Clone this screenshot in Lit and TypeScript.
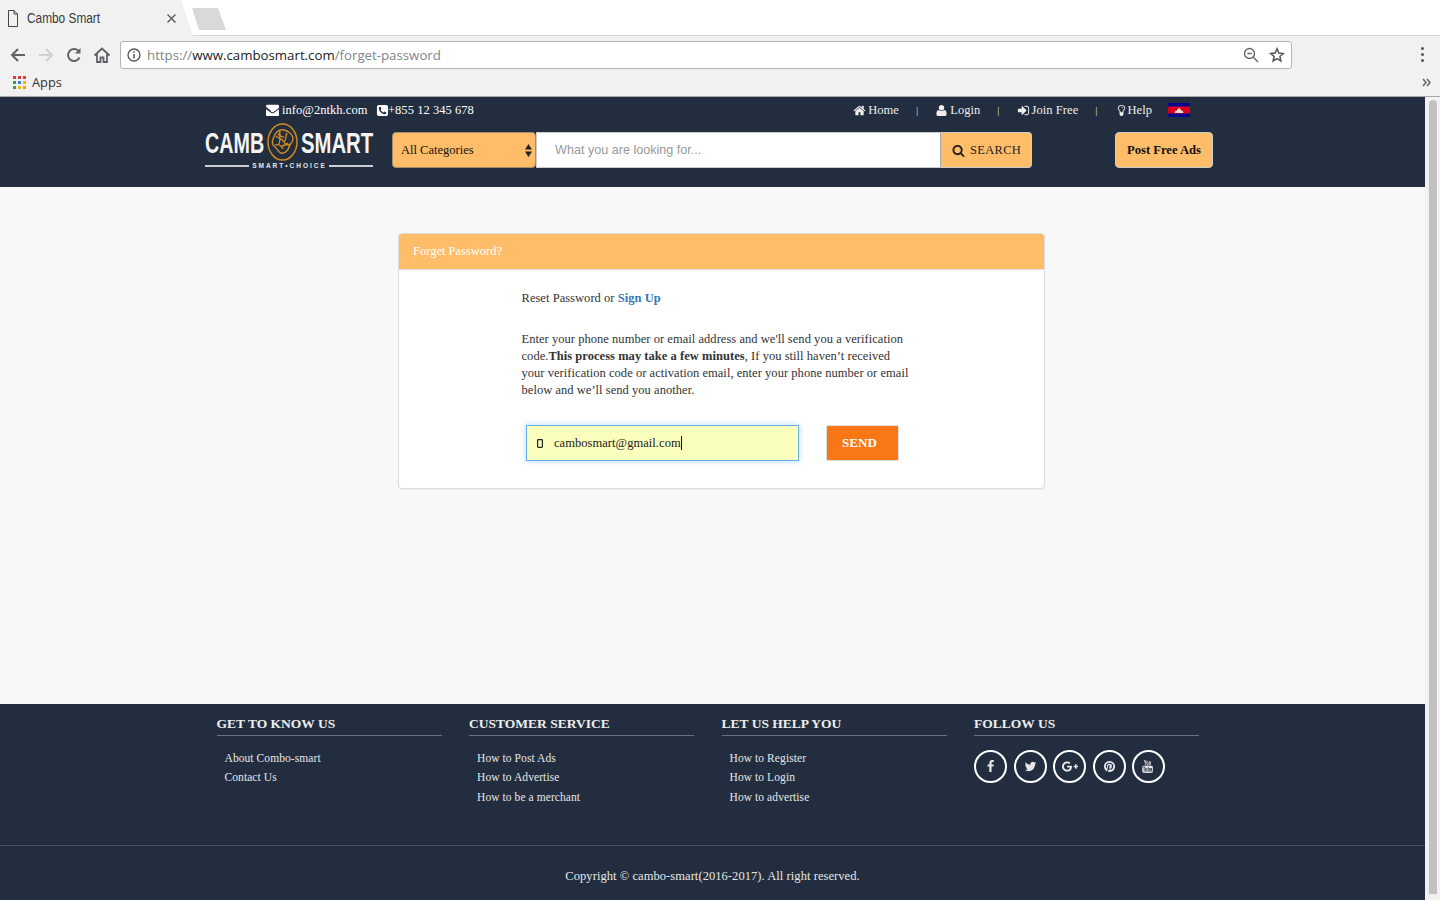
import { LitElement, html, css } from "lit";
import { customElement } from "lit/decorators.js";

const fa = (d: string, box = 1792, cls = "fa") =>
  html`<svg class=${cls} viewBox="0 0 ${box} 1792" fill="currentColor"><path d=${d}></path></svg>`;

const P = {
  envelope: "M1792 710v794q0 66-47 113t-113 47H160q-66 0-113-47T0 1504V710q44 49 101 87 362 246 497 345 57 42 92.500 65.500t94.500 48 110 24.500h2q51 0 110-24.500t94.500-48 92.500-65.500q170-123 498-345 57-39 100-87zm0-294q0 79-49 151t-122 123q-376 261-468 325-10 7-42.500 30.500t-54 38-52 32.500-57.500 27-50 9h-2q-23 0-50-9t-57.500-27-52-32.500-54-38T639 867q-91-64-262-182.500T172 542q-62-42-117-115.500T0 290q0-78 41.500-130T160 108h1472q65 0 112.500 47t47.500 113z",
  phone: "M1408 1193q0-11-2-16t-18-16.500-40.500-25-47.500-26.500-45.500-25-28.500-15q-5-3-19-13t-25-15-21-5q-15 0-36.500 20.500t-39.500 45-38.500 45-33.500 20.500q-7 0-16.500-3.500t-15.500-6.500-17-9.500-14-8.500q-99-55-170-126.500t-127-170.500q-2-3-8.500-14t-9.500-17-6.500-15.500-3.500-16.500q0-13 20.500-33.500t45-38.500 45-39.500 20.500-36.500q0-10-5-21t-15-25-13-19q-3-6-15-28.500t-25-45.500-26.500-47.500-25-40.500-16.500-18-16-2q-48 0-101 22-46 21-80 94.500t-34 130.500q0 16 2.500 34t5 30.500 9 33 10 29.500 12.500 33 11 30q60 164 216.500 320.500t320.500 216.500q6 2 30 11t33 12.500 29.500 10 33 9 30.500 5 34 2.500q57 0 130.500-34t94.500-80q22-53 22-101zm256-777v960q0 119-84.500 203.500t-203.500 84.500h-960q-119 0-203.500-84.500t-84.500-203.500v-960q0-119 84.500-203.500t203.500-84.500h960q119 0 203.500 84.500t84.500 203.500z",
  home: "M1472 992v480q0 26-19 45t-45 19h-384v-384h-256v384h-384q-26 0-45-19t-19-45v-480q0-1 .5-3t.5-3l575-474 575 474q1 2 1 6zm223-69l-62 74q-8 9-21 11h-3q-13 0-21-7l-692-577-692 577q-12 8-24 7-13-2-21-11l-62-74q-8-10-7-23.500t11-21.500l719-599q32-26 76-26t76 26l244 204v-195q0-14 9-23t23-9h192q14 0 23 9t9 23v408l219 182q10 8 11 21.500t-7 23.500z",
  user: "M1600 1405q0 120-73 189.500t-194 69.500h-874q-121 0-194-69.500t-73-189.500q0-53 3.500-103.500t14-109 26.500-108.500 43-97.500 62-81 85.500-53.500 111.500-20q9 0 42 21.500t74.500 48 108 48 133.500 21.500 133.500-21.500 108-48 74.500-48 42-21.500q61 0 111.500 20t85.500 53.500 62 81 43 97.500 26.500 108.500 14 109 3.500 103.500zm-320-893q0 159-112.500 271.500t-271.500 112.500-271.500-112.500-112.500-271.500 112.500-271.500 271.500-112.500 271.500 112.500 112.500 271.500z",
  signin: "M1312 896q0 26-19 45l-544 544q-19 19-45 19t-45-19-19-45v-288h-448q-26 0-45-19t-19-45v-384q0-26 19-45t45-19h448v-288q0-26 19-45t45-19 45 19l544 544q19 19 19 45zm352-352v704q0 119-84.500 203.500t-203.500 84.500h-320q-13 0-22.500-9.500t-9.500-22.500q0-4-1-20t-.5-26.500 3-23.500 10-19.500 20.500-6.500h320q66 0 113-47t47-113v-704q0-66-47-113t-113-47h-312l-11.500-1-11.500-3-8-5.500-7-9-2-13.500q0-4-1-20t-.5-26.500 3-23.500 10-19.500 20.500-6.500h320q119 0 203.500 84.500t84.500 203.500z",
  bulb: "M1120 576q0 13-9.500 22.500t-22.500 9.500-22.500-9.500-9.500-22.500q0-46-54-71t-106-25q-13 0-22.500-9.500t-9.500-22.500 9.500-22.500 22.500-9.500q50 0 99.500 16t87 54 37.500 90zm160 0q0-72-34.500-134t-90-101.500-123-62-136.500-22.500-136.500 22.500-123 62-90 101.500-34.500 134q0 101 68 180 10 11 30.500 33t30.500 33q128 153 141 298h228q13-145 141-298 10-11 30.500-33t30.500-33q68-79 68-180zm128 0q0 155-103 268-45 49-74.500 87t-59.500 95.500-34 107.500q47 28 47 82 0 37-25 64 25 27 25 64 0 52-45 81 13 23 13 47 0 46-31.500 71t-77.500 25q-20 44-60 70t-87 26-87-26-60-70q-46 0-77.500-25t-31.500-71q0-24 13-47-45-29-45-81 0-37 25-64-25-27-25-64 0-54 47-82-4-50-34-107.500t-59.500-95.500-74.500-87q-103-113-103-268 0-99 44.500-184.500t117-142 164-89 186.500-32.500 186.500 32.500 164 89 117 142 44.500 184.500z",
  search: "M1216 832q0-185-131.500-316.500t-316.500-131.500-316.500 131.500-131.500 316.500 131.500 316.500 316.500 131.500 316.500-131.500 131.500-316.500zm512 832q0 52-38 90t-90 38q-54 0-90-38l-343-342q-179 124-399 124-143 0-273.500-55.500t-225-150-150-225-55.500-273.500 55.500-273.500 150-225 225-150 273.500-55.500 273.500 55.500 225 150 150 225 55.500 273.500q0 220-124 399l343 343q37 37 37 90z",
  facebook: "M1343 12v264h-157q-86 0-116 36t-30 108v189h293l-39 296h-254v759h-306v-759h-255v-296h255v-218q0-186 104-288.500t277-102.500q147 0 228 12z",
  twitter: "M1684 408q-67 98-162 167 1 14 1 42 0 130-38 259.500t-115.500 248.500-184.500 210.500-258 146-323 54.500q-271 0-496-145 35 4 78 4 225 0 401-138-105-2-188-64.500t-114-159.500q33 5 61 5 43 0 85-11-112-23-185.500-111.500t-73.500-205.500v-4q68 38 146 41-66-44-105-115t-39-154q0-88 44-163 121 149 294.500 238.500t371.500 99.500q-8-38-8-74 0-134 94.500-228.500t228.500-94.500q140 0 236 102 109-21 205-78-37 115-142 178 92-10 184-50z",
  gplus: "M1437 913q0 208-87 370.500t-248 254-369 91.500q-149 0-285-58t-234-156-156-234-58-285 58-285 156-234 234-156 285-58q286 0 491 192l-199 191q-117-113-292-113-123 0-227.500 62t-165.500 168.500-61 232.500 61 232.500 165.500 168.500 227.500 62q83 0 152.500-23t114.500-57.500 78.500-78.500 49-83 21.500-74h-416v-252h692q12 63 12 122zm867-122v210h-209v209h-210v-209h-209v-210h209v-209h210v209h209z",
  pinterest: "M1664 896q0 209-103 385.500t-279.500 279.500-385.500 103q-111 0-218-32 59-93 78-164 9-34 54-211 20 39 73 67.500t114 28.500q121 0 216-68.500t147-188.500 52-270q0-114-59.500-214t-172.500-163-255-63q-105 0-196 29t-154.500 77-109 110.500-67 129.500-21.500 134q0 104 40 183t117 111q30 12 38-20 2-7 8-31t8-30q6-23-11-43-51-61-51-151 0-151 104.500-259.500t273.500-108.500q151 0 235.500 82t84.500 213q0 170-68.500 289t-175.500 119q-61 0-98-43.500t-23-104.500q8-35 26.500-93.500t30-103 11.500-75.500q0-50-27-83t-77-33q-62 0-105 57t-43 142q0 73 25 122l-99 418q-17 70-13 177-206-91-333-281t-127-423q0-209 103-385.500t279.500-279.500 385.500-103 385.500 103 279.500 279.500 103 385.500z",
  youtube: "M971 1244v211q0 67-39 67-23 0-45-22v-301q22-22 45-22 39 0 39 67zm338 1v46h-90v-46q0-68 45-68t45 68zm-966-218h107v-94h-312v94h105v569h100v-569zm288 569h89v-494h-89v378q-30 42-57 42-18 0-21-21-1-3-1-35v-364h-89v391q0 49 8 73 12 37 58 37 48 0 102-61v54zm429-148v-197q0-73-9-99-17-56-71-56-50 0-93 54v-217h-89v663h89v-48q45 55 93 55 54 0 71-55 9-27 9-100zm338-10v-13h-91q0 51-2 61-7 36-40 36-46 0-46-69v-87h179v-103q0-79-27-116-39-51-106-51-68 0-107 51-28 37-28 116v173q0 79 29 116 39 51 108 51 72 0 108-53 18-27 21-54 2-9 2-58zm-608-913v-210q0-69-43-69t-43 69v210q0 70 43 70t43-70zm719 751q0 234-26 350-14 59-58 99t-102 46q-184 21-555 21t-555-21q-58-6-102.500-46t-57.500-99q-26-112-26-350 0-234 26-350 14-59 58-99t103-47q183-20 554-20t555 20q58 7 102.500 47t57.500 99q26 112 26 350zm-998-1276h102l-121 399v271h-100v-271q-14-74-61-212-37-103-65-187h106l71 263zm370 333v175q0 81-28 118-38 51-106 51-67 0-105-51-28-38-28-118v-175q0-80 28-117 38-51 105-51 68 0 106 51 28 37 28 117zm335-162v499h-91v-55q-53 62-103 62-46 0-59-37-8-24-8-75v-394h91v367q0 33 1 35 3 22 21 22 27 0 57-43v-381h91z",
};

const footerCols = [
  { title: "GET TO KNOW US", links: ["About Combo-smart", "Contact Us"] },
  { title: "CUSTOMER SERVICE", links: ["How to Post Ads", "How to Advertise", "How to be a merchant"] },
  { title: "LET US HELP YOU", links: ["How to Register", "How to Login", "How to advertise"] },
];

const appsColors = ["#e53935", "#e53935", "#e53935", "#2e9e4f", "#3f7fe8", "#f4b400", "#2e9e4f", "#f4b400", "#f4a000"];

@customElement("app-root")
export class AppRoot extends LitElement {
  static styles = css`
    :host { display: block; width: 1440px; height: 900px; overflow: hidden; font-family: "Liberation Serif", "Times New Roman", serif; }
    * { box-sizing: border-box; }
    a { color: inherit; text-decoration: none; }

    .strip { height: 36px; background: #fff; display: flex; border-bottom: 1px solid #d4d4d4; }
    .tab { width: 193px; height: 36px; background: #f1f1f1; clip-path: polygon(0 0, 181px 0, 193px 36px, 0 36px); display: flex; align-items: center; padding: 0 0 0 8px; color: #333; }
    .tab-wrap { width: 140px; margin-left: 9px; white-space: nowrap; }
    .tab-title { display: inline-block; font: 15px "Liberation Sans", Arial, sans-serif; color: #3a3a3a; transform: scaleX(.79); transform-origin: left center; margin-right: -19px; }
    .newtab { width: 34px; height: 22px; margin: 8px 0 0 -1px; background: #d9d9d9; clip-path: polygon(0 0, 26px 0, 34px 22px, 7px 22px); }

    .toolbar { height: 34px; background: #f1f1f1; display: flex; align-items: center; padding: 3px 0 0 9px; }
    .nav-i { width: 18px; height: 18px; margin-right: 10px; flex: none; }
    .omni { width: 1172px; height: 28px; margin: 1px 0 0 -1px; background: #fff; border: 1px solid #b4b4b4; border-radius: 3px; display: flex; align-items: center; padding: 0 6px; }
    .url { font: 13.250px "Open Sans", "Noto Sans", sans-serif; color: #80868b; margin-left: 6px; flex: 1; white-space: nowrap; }
    .url b { font-weight: 400; color: #222; }
    .omni-r { width: 16px; height: 16px; margin-left: 10px; flex: none; }
    .kebab { width: 4px; margin-left: 129px; display: flex; flex-direction: column; gap: 3px; }
    .kebab i { width: 3px; height: 3px; background: #555; border-radius: 50%; }

    .bookmarks { height: 27px; background: #f1f1f1; border-bottom: 1px solid #a9a9a9; display: flex; align-items: center; padding: 0 0 2px 13px; font: 12.800px "Open Sans", "Noto Sans", sans-serif; color: #333; }
    .apps { display: grid; grid-template-columns: repeat(3, 3px); grid-auto-rows: 3px; gap: 2px; margin-right: 6px; }
    .bm-more { margin-left: auto; margin-right: 9px; width: 9px; height: 9px; }

    .main { display: flex; height: 804px; }
    .page { width: 1425px; background: #f8f8f8; display: flex; flex-direction: column; }
    .scroll { width: 15px; background: #f1f1f1; padding: 3px 3px 7px 4px; }
    .thumb { height: 100%; background: #c1c1c1; border-radius: 5px 5px 0 0; }

    header { height: 90px; background: #222e3f; color: #fff; }
    .top { height: 26px; display: flex; align-items: center; padding-left: 266px; padding-right: 235px; font-size: 12.500px; letter-spacing: 0.05px; }
    .top .fa { width: 13px; height: 13px; flex: none; }
    .contact { display: flex; align-items: center; }
    .contact .fa { margin-right: 3px; }
    .contact .ph { margin-left: 8.500px; margin-right: -1px; }
    .nav { margin-left: auto; display: flex; align-items: center; }
    .nav a { display: flex; align-items: center; color: #eee; }
    .nav a .fa { margin-right: 2px; }
    .nav a .bulb { margin-right: 0; }
    .sep { margin: 0 17px; font-size: 11px; color: #ddd; }
    .flag { width: 22px; height: 14px; margin-left: 16px; display: block; }

    .row { display: flex; margin-top: 9px; padding-left: 205px; height: 36px; }
    .logo { width: 168px; margin-right: 19px; height: 36px; display: flex; flex-direction: column; }
    .logo-main { display: flex; align-items: center; height: 23px; font: 700 29px/23px "Liberation Sans", Arial, sans-serif; color: #f4f4f4; white-space: nowrap; }
    .logo-main span { display: inline-block; transform-origin: left center; }
    .camb { transform: scaleX(.68); margin-right: -28px; }
    .smart { transform: scaleX(.7); margin-right: -31px; }
    .logo-medal { width: 33px; height: 38px; margin: -8px 2px -5px 2px; flex: none; }
    .logo-sub { display: flex; align-items: center; margin-top: 7px; font: 700 6.500px/8px "Liberation Sans", sans-serif; letter-spacing: 2px; color: #e8e8e8; white-space: nowrap; }
    .logo-sub i { flex: 1; height: 2px; background: #c9ccd1; }
    .logo-sub span { margin: 0 2px 0 3px; }

    .select { width: 144px; height: 36px; background: #ffbd69; border: 1px solid #a98d64; border-radius: 4px; color: #111; font-size: 12.500px; display: flex; align-items: center; padding: 0 3px 0 8px; justify-content: space-between; }
    .select svg { width: 7px; height: 13px; }
    .q { width: 405px; height: 36px; border: 1px solid #ccc; border-right-color: #aaa; background: #fff; padding: 0 18px; font: 12.600px "Liberation Sans", Arial, sans-serif; outline: none; }
    .q::placeholder { color: #999; opacity: 1; }
    .search { width: 91px; height: 36px; background: #ffbd69; border: 1px solid #ccc; border-left: 0; border-radius: 0 4px 4px 0; color: #222; font: 12.500px "Liberation Serif", serif; letter-spacing: 0.3px; display: flex; align-items: center; padding: 0 0 0 11px; }
    .search .fa { width: 13px; height: 13px; margin-right: 5px; }
    .post { margin-left: 83px; width: 98px; height: 36px; background: #ffbd69; border: 1px solid #ccc; border-radius: 4px; color: #111; font: 700 12.600px "Liberation Serif", serif; display: flex; align-items: center; justify-content: center; white-space: nowrap; }

    .content { height: 517px; padding: 46px 0 0 398px; }
    .card { width: 647px; height: 256px; background: #fff; border: 1px solid #ddd; border-radius: 4px; box-shadow: 0 1px 1px rgba(0,0,0,.05); overflow: hidden; }
    .card-h { height: 36px; background: #ffbd69; border-bottom: 1px solid #ddd; color: #fff; font-size: 12.500px; line-height: 35px; padding-left: 14px; }
    .card-b { padding: 20px 0 0 122.500px; color: #333; font-size: 12.500px; line-height: 17px; letter-spacing: 0.04px; }
    .reset { height: 17px; }
    .reset a { color: #337ab7; font-weight: 700; }
    .para { width: 392px; margin: 24px 0 0; height: 68px; white-space: nowrap; }
    .form { display: flex; margin: 26px 0 0 4.500px; }
    .field { width: 273px; height: 36px; background: #faffbd; border: 1px solid #66afe9; box-shadow: 0 0 6px rgba(102,175,233,.5); display: flex; align-items: center; padding: 0 0 0 10px; color: #222; letter-spacing: 0.05px; }
    .field svg { width: 6px; height: 9px; margin-right: 11px; }
    .field .caret { width: 1px; height: 14px; background: #111; }
    .send { margin-left: 27px; width: 73px; height: 36px; background: #fa7716; border: 1px solid #ddd; border-radius: 2px; color: #fff; font-weight: 700; font-size: 13px; display: flex; align-items: center; padding: 0 0 2px 15px; }

    footer { height: 196px; background: #222e3f; color: #fff; }
    .cols { display: grid; grid-template-columns: repeat(4, 225px); column-gap: 27.500px; padding: 10px 0 0 216.500px; height: 142px; border-bottom: 1px solid #4a5361; }
    .col h4 { margin: 0; font-size: 13.500px; line-height: 20px; font-weight: 700; height: 22px; border-bottom: 1px solid #6a7280; color: #eee; }
    .col ul { list-style: none; margin: 13px 0 0; padding: 0 0 0 8px; font-size: 11.500px; letter-spacing: 0.08px; line-height: 19.400px; color: #e6e6e6; }
    .social { display: flex; gap: 6.500px; margin-top: 14px; }
    .social a { width: 33px; height: 33px; border: 2px solid #fff; border-radius: 50%; display: flex; align-items: center; justify-content: center; color: #e8e8e8; }
    .social .fa { width: 13px; height: 13px; }
    .social .wide { width: 16px; height: 13px; }
    .copy { text-align: center; font-size: 12.500px; line-height: 17px; margin-top: 22px; color: #e6e6e6; letter-spacing: 0.06px; }
  `;

  render() {
    return html`
      <div class="strip">
        <div class="tab">
          <svg width="10" height="17" viewBox="0 0 10 17" fill="none" stroke="#444" stroke-width="1"><path d="M.5.5h5.500l3.500 3.500v12.500h-9zM6 .5v3.500h3.500"></path></svg>
          <div class="tab-wrap"><span class="tab-title">Cambo Smart</span></div>
          <svg width="9" height="9" viewBox="0 0 9 9" stroke="#555" stroke-width="1.300"><path d="M.5.5l8 8M8.500.5l-8 8"></path></svg>
        </div>
        <div class="newtab"></div>
      </div>
      <div class="toolbar">
        <svg class="nav-i" viewBox="0 0 18 18" fill="none" stroke="#5f6368" stroke-width="2"><path d="M16 9H3M9 3L3 9l6 6"></path></svg>
        <svg class="nav-i" viewBox="0 0 18 18" fill="none" stroke="#cfcfcf" stroke-width="2"><path d="M2 9h13M9 3l6 6-6 6"></path></svg>
        <svg class="nav-i" viewBox="0 0 18 18" fill="none" stroke="#5f6368" stroke-width="2"><path d="M14.500 11.500A6 6 0 1 1 13.300 4.800"></path><path d="M15.500 2v5.500H10" fill="#5f6368" stroke="none"></path></svg>
        <svg class="nav-i" viewBox="0 0 18 18" fill="none" stroke="#5f6368" stroke-width="1.800"><path d="M1.500 9.500L9 2.500l7.500 7M4 8v8h3.500v-4.500h3V16H14V8"></path></svg>
        <div class="omni">
          <svg width="14" height="14" viewBox="0 0 14 14" fill="none" stroke="#555" stroke-width="1.300"><circle cx="7" cy="7" r="6"></circle><path d="M7 6v4.500M7 3.200v1.600" stroke-width="1.500"></path></svg>
          <span class="url">https://<b>www.cambosmart.com</b>/forget-password</span>
          <svg class="omni-r" viewBox="0 0 16 16" fill="none" stroke="#666" stroke-width="1.400"><circle cx="6.500" cy="6.500" r="5"></circle><path d="M4.300 6.500h4.400M10.300 10.300l4.700 4.700"></path></svg>
          <svg class="omni-r" viewBox="0 0 16 16" fill="none" stroke="#555" stroke-width="1.500"><path d="M8 1.800l1.800 4.300 4.500.4-3.400 3 1 4.500L8 11.600 4.100 14l1-4.500-3.400-3 4.500-.4z"></path></svg>
        </div>
        <div class="kebab"><i></i><i></i><i></i></div>
      </div>
      <div class="bookmarks">
        <div class="apps">${appsColors.map((c) => html`<i style="background:${c}"></i>`)}</div>
        <span>Apps</span>
        <svg class="bm-more" viewBox="0 0 9 9" fill="none" stroke="#666" stroke-width="1.500"><path d="M1 1l3 3.500L1 8M5 1l3 3.500L5 8"></path></svg>
      </div>
      <div class="main">
        <div class="page">
          <header>
            <div class="top">
              <div class="contact">
                ${fa(P.envelope)}<span>info@2ntkh.com</span>
                ${fa(P.phone, 1792, "fa ph")}<span>+855 12 345 678</span>
              </div>
              <div class="nav">
                <a>${fa(P.home)}Home</a><span class="sep">|</span>
                <a>${fa(P.user)}Login</a><span class="sep">|</span>
                <a>${fa(P.signin)}Join Free</a><span class="sep">|</span>
                <a>${fa(P.bulb, 1792, "fa bulb")}Help</a>
                <svg class="flag" viewBox="0 0 22 14">
                  <rect width="22" height="14" fill="#03078f"></rect>
                  <rect y="3.500" width="22" height="7" fill="#d9001b"></rect>
                  <path d="M6.500 10l1-2.500 1 .5.800-2 .8 .5.900-2.500.9 2.500.8-.5.800 2 1-.5 1 2.500z" fill="#f3dcd6"></path>
                </svg>
              </div>
            </div>
            <div class="row">
              <div class="logo">
                <div class="logo-main">
                  <span class="camb">CAMB</span>
                  <svg class="logo-medal" viewBox="0 0 33 38" fill="none" stroke="#d08a1e">
                    <ellipse cx="16.500" cy="19" rx="14.500" ry="18" stroke-width="1.500"></ellipse>
                    <path d="M7 16c2-6 6-10 11-9s9 5 9 9-3 4-4 8-5 7-8 6-3-4-6-6-3-5-2-8zM10 13c3 3 6 2 8 6s5 3 7 2M14 8c-1 4 1 9-1 13M21 10c-2 3 0 6-3 9M9 22c3-1 6 0 8 4M12 11c2 1 3 3 6 3M15 24c2-2 5-2 7-4" stroke-width="1.400"></path>
                  </svg>
                  <span class="smart">SMART</span>
                </div>
                <div class="logo-sub"><i></i><span>SMART•CHOICE</span><i></i></div>
              </div>
              <div class="select">
                <span>All Categories</span>
                <svg viewBox="0 0 7 13" fill="#222"><path d="M3.500 0L7 5.500H0zM3.500 13L0 7.500h7z"></path></svg>
              </div>
              <input class="q" placeholder="What you are looking for..." />
              <div class="search">${fa(P.search)}<span>SEARCH</span></div>
              <div class="post">Post Free Ads</div>
            </div>
          </header>
          <div class="content">
            <div class="card">
              <div class="card-h">Forget Password?</div>
              <div class="card-b">
                <div class="reset">Reset Password or <a>Sign Up</a></div>
                <div class="para">Enter your phone number or email address and we'll send you a verification<br />code.<b>This process may take a few minutes</b>, If you still haven’t received<br />your verification code or activation email, enter your phone number or email<br />below and we’ll send you another.</div>
                <div class="form">
                  <div class="field">
                    <svg viewBox="0 0 6 9" fill="none" stroke="#222" stroke-width="1.200"><rect x=".6" y=".6" width="4.800" height="7.800" rx=".8"></rect></svg>
                    <span>cambosmart@gmail.com</span><i class="caret"></i>
                  </div>
                  <div class="send">SEND</div>
                </div>
              </div>
            </div>
          </div>
          <footer>
            <div class="cols">
              ${footerCols.map(
                (c) => html`<div class="col"><h4>${c.title}</h4><ul>${c.links.map((l) => html`<li>${l}</li>`)}</ul></div>`
              )}
              <div class="col">
                <h4>FOLLOW US</h4>
                <div class="social">
                  <a>${fa(P.facebook)}</a>
                  <a>${fa(P.twitter)}</a>
                  <a>${fa(P.gplus, 2304, "wide")}</a>
                  <a>${fa(P.pinterest)}</a>
                  <a>${fa(P.youtube)}</a>
                </div>
              </div>
            </div>
            <div class="copy">Copyright © cambo-smart(2016-2017). All right reserved.</div>
          </footer>
        </div>
        <div class="scroll"><div class="thumb"></div></div>
      </div>
    `;
  }
}
